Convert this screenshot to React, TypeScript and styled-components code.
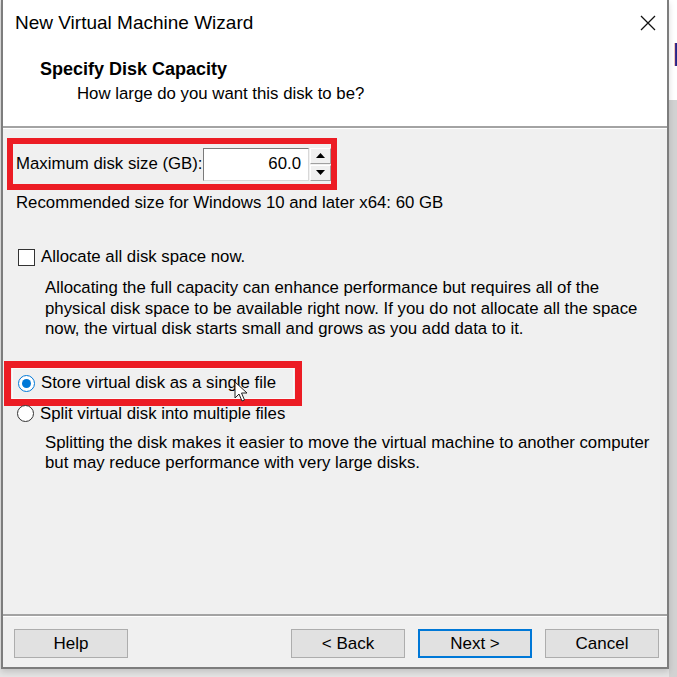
import React from "react";
import styled, { createGlobalStyle } from "styled-components";

const GlobalStyle = createGlobalStyle`
  html, body {
    margin: 0;
    padding: 0;
    background: #e4e4e4;
  }
  body {
    font-family: "Liberation Sans", Arial, sans-serif;
    color: #000;
  }
`;

const Page = styled.div`
  display: flex;
  width: 677px;
  height: 677px;
  overflow: hidden;
`;

const Window = styled.div`
  position: relative;
  display: flex;
  flex-direction: column;
  width: 664px;
  height: 667px;
  margin-left: 1px;
  border: 2px solid #7d7d7d;
  border-top: none;
  background: #f0f0f0;
  box-shadow: 0 3px 6px rgba(0, 0, 0, 0.15);
  flex-shrink: 0;
`;

const Backdrop = styled.div`
  flex: 1;
  display: flex;
  flex-direction: column;
  background: #d2d2d2;
`;

const BackdropTop = styled.div`
  height: 100px;
  background: #fff;
  padding-top: 34px;
  padding-left: 3px;
  box-sizing: border-box;
  font-family: "Liberation Sans", Arial, sans-serif;
  font-size: 34px;
  line-height: 40px;
  color: #1f2a8a;
`;

const TitleBar = styled.div`
  display: flex;
  align-items: center;
  justify-content: space-between;
  box-sizing: border-box;
  height: 44px;
  padding: 2px 4px 0 12px;
  background: #fff;
  font-size: 19px;
`;

const CloseButton = styled.div`
  display: flex;
  align-items: center;
  justify-content: center;
  width: 30px;
  height: 30px;
`;

const Header = styled.div`
  background: #fff;
  padding: 14px 0 22px;
  border-bottom: 2px solid #a3a3a3;
  box-shadow: 0 1px 0 #fff;
`;

const Heading = styled.div`
  margin-left: 37px;
  font-weight: bold;
  font-size: 18px;
  line-height: 22px;
`;

const Subheading = styled.div`
  margin-left: 74px;
  margin-top: 4px;
  font-size: 16.8px;
  line-height: 20px;
`;

const Body = styled.div`
  flex: 1;
  display: flex;
  flex-direction: column;
  padding-top: 10px;
  font-size: 16.8px;
`;

const Highlight = styled.div<{ $left: number; $top: number; $width: number; $height: number; $thick: number }>`
  display: flex;
  flex-direction: column;
  justify-content: center;
  box-sizing: border-box;
  margin-left: ${(p) => p.$left}px;
  margin-top: ${(p) => p.$top}px;
  width: ${(p) => p.$width}px;
  height: ${(p) => p.$height}px;
  border: ${(p) => p.$thick}px solid #ec1c24;
`;

const SizeRow = styled.div`
  display: flex;
  align-items: center;
  padding-left: 3px;
  line-height: 20px;
`;

const SizeLabel = styled.span`
  flex-shrink: 0;
  width: 187px;
  white-space: nowrap;
`;

const NumberInput = styled.div`
  display: flex;
  align-items: center;
  justify-content: flex-end;
  flex-shrink: 0;
  box-sizing: border-box;
  width: 106px;
  height: 33px;
  padding-right: 7px;
  background: #fff;
  border: 1px solid #7a7a7a;
  border-right-color: #d8d8d8;
  border-bottom-color: #d8d8d8;
`;

const Spinner = styled.div`
  display: flex;
  flex-direction: column;
  flex-shrink: 0;
  gap: 1px;
  margin-left: 1px;
  width: 21px;
  height: 33px;
`;

const SpinButton = styled.div`
  flex: 1;
  display: flex;
  align-items: center;
  justify-content: center;
  background: #f0f0f0;
  border: 1px solid #fff;
  border-right-color: #a0a0a0;
  border-bottom-color: #a0a0a0;
`;

const Line = styled.div<{ $left: number; $top: number }>`
  margin-left: ${(p) => p.$left}px;
  margin-top: ${(p) => p.$top}px;
  line-height: 20px;
`;

const Option = styled.label<{ $left: number; $top: number }>`
  display: flex;
  align-items: center;
  gap: 6px;
  margin-left: ${(p) => p.$left}px;
  margin-top: ${(p) => p.$top}px;
  line-height: 20px;
  white-space: nowrap;
`;

const CheckBox = styled.span`
  box-sizing: border-box;
  width: 17px;
  height: 17px;
  background: #fff;
  border: 1px solid #333;
`;

const Radio = styled.span<{ $checked?: boolean }>`
  position: relative;
  box-sizing: border-box;
  width: 17px;
  height: 17px;
  border-radius: 50%;
  background: #fff;
  border: 1px solid ${(p) => (p.$checked ? "#0078d7" : "#333")};
  &::after {
    content: "";
    display: ${(p) => (p.$checked ? "block" : "none")};
    position: absolute;
    inset: 3px;
    border-radius: 50%;
    background: #0078d7;
  }
`;

const FocusBox = styled.div`
  display: flex;
  align-items: center;
  height: 29px;
  margin: 0 1px;
  padding-left: 4px;
  border: 1px solid #fafafa;
`;

const Paragraph = styled.p<{ $top: number }>`
  margin: ${(p) => p.$top}px 0 0 42px;
  line-height: 20.5px;
`;

const Footer = styled.div`
  display: flex;
  align-items: flex-start;
  box-sizing: border-box;
  height: 53px;
  padding: 13px 8px 0 11px;
  border-top: 2px solid #a3a3a3;
  box-shadow: inset 0 1px 0 #fff;
`;

const Spacer = styled.div`
  flex: 1;
`;

const Button = styled.div<{ $default?: boolean }>`
  display: flex;
  align-items: center;
  justify-content: center;
  box-sizing: border-box;
  width: 114px;
  height: 29px;
  margin-left: 13px;
  background: #e1e1e1;
  border: ${(p) => (p.$default ? "2px solid #0078d7" : "1px solid #adadad")};
  font-size: 17px;
  &:first-child {
    margin-left: 0;
  }
`;

const Cursor = styled.svg`
  position: absolute;
  left: 231px;
  top: 381px;
`;

export default function App() {
  return (
    <Page>
      <GlobalStyle />
      <Window>
        <TitleBar>
          <span>New Virtual Machine Wizard</span>
          <CloseButton>
            <svg width="16" height="16" viewBox="0 0 16 16">
              <path d="M1 1 L15 15 M15 1 L1 15" stroke="#111" strokeWidth="1.3" />
            </svg>
          </CloseButton>
        </TitleBar>
        <Header>
          <Heading>Specify Disk Capacity</Heading>
          <Subheading>How large do you want this disk to be?</Subheading>
        </Header>
        <Body>
          <Highlight $left={4} $top={0} $width={330} $height={52} $thick={6}>
            <SizeRow>
              <SizeLabel>Maximum disk size (GB):</SizeLabel>
              <NumberInput>60.0</NumberInput>
              <Spinner>
                <SpinButton>
                  <svg width="9" height="5" viewBox="0 0 9 5">
                    <path d="M0 5 L4.5 0 L9 5 Z" fill="#000" />
                  </svg>
                </SpinButton>
                <SpinButton>
                  <svg width="9" height="5" viewBox="0 0 9 5">
                    <path d="M0 0 L4.5 5 L9 0 Z" fill="#000" />
                  </svg>
                </SpinButton>
              </Spinner>
            </SizeRow>
          </Highlight>
          <Line $left={13} $top={3}>
            Recommended size for Windows 10 and later x64: 60 GB
          </Line>
          <Option $left={15} $top={34}>
            <CheckBox />
            Allocate all disk space now.
          </Option>
          <Paragraph $top={11}>
            Allocating the full capacity can enhance performance but requires all of the
            <br />
            physical disk space to be available right now. If you do not allocate all the space
            <br />
            now, the virtual disk starts small and grows as you add data to it.
          </Paragraph>
          <Highlight $left={1} $top={21} $width={298} $height={45} $thick={7}>
            <FocusBox>
              <Option $left={1} $top={0}>
                <Radio $checked />
                Store virtual disk as a single file
              </Option>
            </FocusBox>
          </Highlight>
          <Option $left={14} $top={-2}>
            <Radio />
            Split virtual disk into multiple files
          </Option>
          <Paragraph $top={9}>
            Splitting the disk makes it easier to move the virtual machine to another computer
            <br />
            but may reduce performance with very large disks.
          </Paragraph>
        </Body>
        <Footer>
          <Button>Help</Button>
          <Spacer />
          <Button>&lt; Back</Button>
          <Button $default>Next &gt;</Button>
          <Button>Cancel</Button>
        </Footer>
        <Cursor width="14" height="22" viewBox="0 0 14 22">
          <path
            d="M1 1 L1 17 L5 13 L8 20 L10.5 19 L7.5 12 L13 12 Z"
            fill="#fff"
            stroke="#222"
            strokeWidth="1"
            strokeLinejoin="round"
          />
        </Cursor>
      </Window>
      <Backdrop>
        <BackdropTop>P</BackdropTop>
      </Backdrop>
    </Page>
  );
}
